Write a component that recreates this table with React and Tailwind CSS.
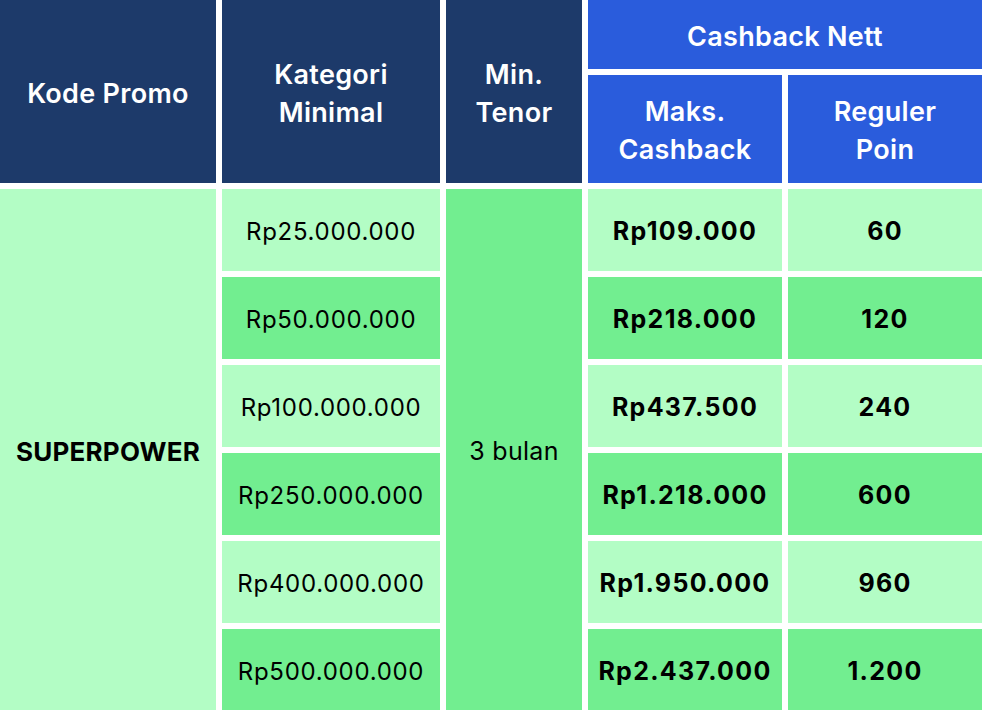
import React from "react";

const rows = [
  { min: "Rp25.000.000", cash: "Rp109.000", poin: "60" },
  { min: "Rp50.000.000", cash: "Rp218.000", poin: "120" },
  { min: "Rp100.000.000", cash: "Rp437.500", poin: "240" },
  { min: "Rp250.000.000", cash: "Rp1.218.000", poin: "600" },
  { min: "Rp400.000.000", cash: "Rp1.950.000", poin: "960" },
  { min: "Rp500.000.000", cash: "Rp2.437.000", poin: "1.200" },
];

const head = "flex items-center justify-center text-center text-white font-semibold text-[27px] leading-[38px] tracking-[0.3px] pt-[4px]";
const cell = "flex items-center justify-center text-center text-black pt-[3px]";

export default function App() {
  return (
    <div
      className="w-[982px] h-[710px] overflow-hidden bg-white"
      style={{ fontFamily: "Inter, 'Noto Sans', sans-serif" }}
    >
      <div className="grid grid-cols-[216px_218px_136px_194px_194px] grid-rows-[69px_108px_repeat(6,82px)] gap-[6px]">
        <div className={`${head} row-span-2 bg-[#1d3a6a]`}>Kode Promo</div>
        <div className={`${head} row-span-2 bg-[#1d3a6a]`}>
          Kategori
          <br />
          Minimal
        </div>
        <div className={`${head} row-span-2 bg-[#1d3a6a]`}>
          Min.
          <br />
          Tenor
        </div>
        <div className={`${head} col-span-2 bg-[#2a5cdc]`}>Cashback Nett</div>
        <div className={`${head} bg-[#2a5cdc]`}>
          Maks.
          <br />
          Cashback
        </div>
        <div className={`${head} bg-[#2a5cdc]`}>
          Reguler
          <br />
          Poin
        </div>

        <div className={`${cell} row-span-6 col-start-1 row-start-3 bg-[#b3fdc5] font-bold text-[26px] tracking-[0.2px]`}>
          SUPERPOWER
        </div>
        <div className={`${cell} row-span-6 col-start-3 row-start-3 bg-[#72ee90] text-[25px] tracking-[0.3px]`}>
          3 bulan
        </div>

        {rows.map((r, i) => {
          const bg = i % 2 === 0 ? "bg-[#b3fdc5]" : "bg-[#72ee90]";
          return (
            <React.Fragment key={r.min}>
              <div className={`${cell} col-start-2 ${bg} text-[24px] tracking-[0.7px]`}>{r.min}</div>
              <div className={`${cell} col-start-4 ${bg} font-bold text-[25px] tracking-[1.3px]`}>{r.cash}</div>
              <div className={`${cell} col-start-5 ${bg} font-bold text-[25px] tracking-[1.3px]`}>{r.poin}</div>
            </React.Fragment>
          );
        })}
      </div>
    </div>
  );
}
